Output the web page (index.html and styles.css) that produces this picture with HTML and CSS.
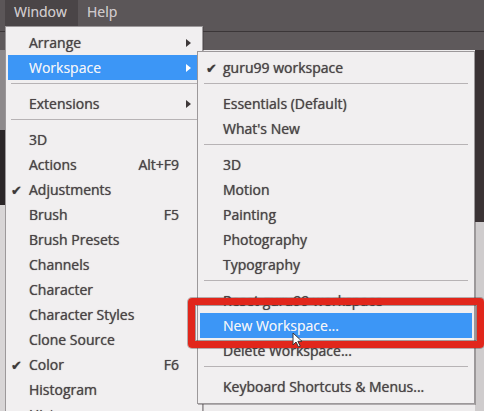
FILE: index.html
```html
<!DOCTYPE html>
<html>
<head>
<meta charset="utf-8">
<link rel="stylesheet" href="styles.css">
</head>
<body>
<div class="app">
  <header class="menubar">
    <span class="mb-item active">Window</span>
    <span class="mb-item">Help</span>
  </header>
  <div class="optionsbar"></div>
  <div class="workspace">
    <div class="left-edge"></div>
    <div class="canvas"></div>
    <div class="right-edge">
      <div class="right-dark"></div>
      <div class="right-light"></div>
    </div>
  </div>

  <div class="menu main-menu">
    <div class="item"><span class="label">Arrange</span><span class="arrow"></span></div>
    <div class="item hl"><span class="label">Workspace</span><span class="arrow"></span></div>
    <div class="sep"></div>
    <div class="item"><span class="label">Extensions</span><span class="arrow"></span></div>
    <div class="sep"></div>
    <div class="item"><span class="label">3D</span></div>
    <div class="item"><span class="label">Actions</span><span class="key">Alt+F9</span></div>
    <div class="item"><span class="check">✔</span><span class="label">Adjustments</span></div>
    <div class="item"><span class="label">Brush</span><span class="key">F5</span></div>
    <div class="item"><span class="label">Brush Presets</span></div>
    <div class="item"><span class="label">Channels</span></div>
    <div class="item"><span class="label">Character</span></div>
    <div class="item"><span class="label">Character Styles</span></div>
    <div class="item"><span class="label">Clone Source</span></div>
    <div class="item"><span class="check">✔</span><span class="label">Color</span><span class="key">F6</span></div>
    <div class="item"><span class="label">Histogram</span></div>
    <div class="item"><span class="label">History</span></div>
  </div>

  <div class="menu sub-menu">
    <div class="item"><span class="check">✔</span><span class="label">guru99 workspace</span></div>
    <div class="sep"></div>
    <div class="item"><span class="label">Essentials (Default)</span></div>
    <div class="item"><span class="label">What's New</span></div>
    <div class="sep"></div>
    <div class="item"><span class="label">3D</span></div>
    <div class="item"><span class="label">Motion</span></div>
    <div class="item"><span class="label">Painting</span></div>
    <div class="item"><span class="label">Photography</span></div>
    <div class="item"><span class="label">Typography</span></div>
    <div class="sep"></div>
    <div class="item"><span class="label">Reset guru99 workspace</span></div>
    <div class="item hl"><span class="label">New Workspace...</span></div>
    <div class="item"><span class="label">Delete Workspace...</span></div>
    <div class="sep"></div>
    <div class="item"><span class="label">Keyboard Shortcuts &amp; Menus...</span></div>
  </div>

  <div class="redbox"></div>

  <svg class="cursor" width="11" height="16" viewBox="0 0 11 16">
    <path d="M1 1 L1 13 L4 10 L6.5 15 L8.3 14.2 L5.9 9.3 L10 9.3 Z" fill="#ffffff" stroke="#3a3536" stroke-width="1" stroke-linejoin="round"/>
  </svg>
</div>
</body>
</html>
```

FILE: styles.css
```css
* { box-sizing: border-box; }
html, body {
  margin: 0;
  padding: 0;
  width: 484px;
  height: 411px;
  overflow: hidden;
  background: #5a5557;
  font-family: "Open Sans", "Noto Sans", "Liberation Sans", sans-serif;
}
.app {
  position: relative;
  width: 484px;
  height: 411px;
  display: flex;
  flex-direction: column;
}
.menubar {
  height: 32px;
  display: flex;
  align-items: flex-start;
  padding-left: 5px;
  background: #5b5658;
  border-bottom: 1px solid #3b3638;
  flex: none;
}
.mb-item {
  height: 26px;
  line-height: 24px;
  font-size: 14px;
  color: #cdc8ca;
  padding: 0 10px 0 9px;
  text-shadow: 0 0 0.6px rgba(220,215,217,.7);
}
.mb-item.active {
  background: #4a4547;
  width: 73px;
}
.optionsbar {
  height: 18px;
  background: #5e595b;
  flex: none;
}
.workspace {
  flex: 1;
  display: flex;
}
.left-edge {
  width: 5px;
  background: linear-gradient(#8d898b 0 80px, #2b2628 80px 155px, #d8d5d6 155px);
}
.canvas {
  flex: 1;
  background: #eeeced;
}
.right-edge {
  width: 9px;
  display: flex;
  flex-direction: column;
}
.right-dark {
  height: 172px;
  background: #3a3234;
}
.right-light {
  flex: 1;
  background: #cfcccd;
}

.menu {
  position: absolute;
  background: #f1eff0;
  border: 1px solid #9c989a;
  padding: 3px 0 4px;
  color: #4a4446;
  font-size: 14px;
  box-shadow: 1px 1px 0 rgba(60,55,57,.35);
}
.main-menu {
  left: 5px;
  top: 26px;
  width: 198px;
  height: 420px;
}
.sub-menu {
  left: 197px;
  top: 51px;
  width: 278px;
  height: 353px;
}
.item {
  position: relative;
  height: 25px;
  display: flex;
  align-items: center;
  padding-left: 21px;
  margin: 0 2px;
  text-shadow: 0 0 0.8px rgba(60,54,56,.8);
}
.sub-menu .item { padding-left: 23px; }
.item.hl {
  background: #3c96f6;
  color: #f2f4f8;
  text-shadow: 0 0 0.6px rgba(255,255,255,.6);
}
.label { white-space: nowrap; }
.check {
  position: absolute;
  left: 3px;
  font-size: 13px;
  color: #3e3839;
}
.sub-menu .check { left: 6px; }
.key {
  margin-left: auto;
  margin-right: 21px;
}
.arrow {
  margin-left: auto;
  margin-right: 9px;
  width: 0;
  height: 0;
  border-top: 4px solid transparent;
  border-bottom: 4px solid transparent;
  border-left: 5px solid #3e3839;
}
.item.hl .arrow { border-left-color: #ffffff; }
.sep {
  height: 1px;
  margin: 3px 6px 7px 6px;
  background: #b7b3b5;
}
.main-menu .sep { margin-left: 5px; margin-right: 5px; }

.redbox {
  position: absolute;
  left: 188px;
  top: 298px;
  width: 296px;
  height: 50px;
  border: 7px solid #e1261b;
  border-radius: 4px;
  box-shadow: inset 0 0 0 1px rgba(70,50,50,.45), 0 0 0 1px rgba(70,50,50,.35);
}
.cursor {
  position: absolute;
  left: 292px;
  top: 332px;
}
```
